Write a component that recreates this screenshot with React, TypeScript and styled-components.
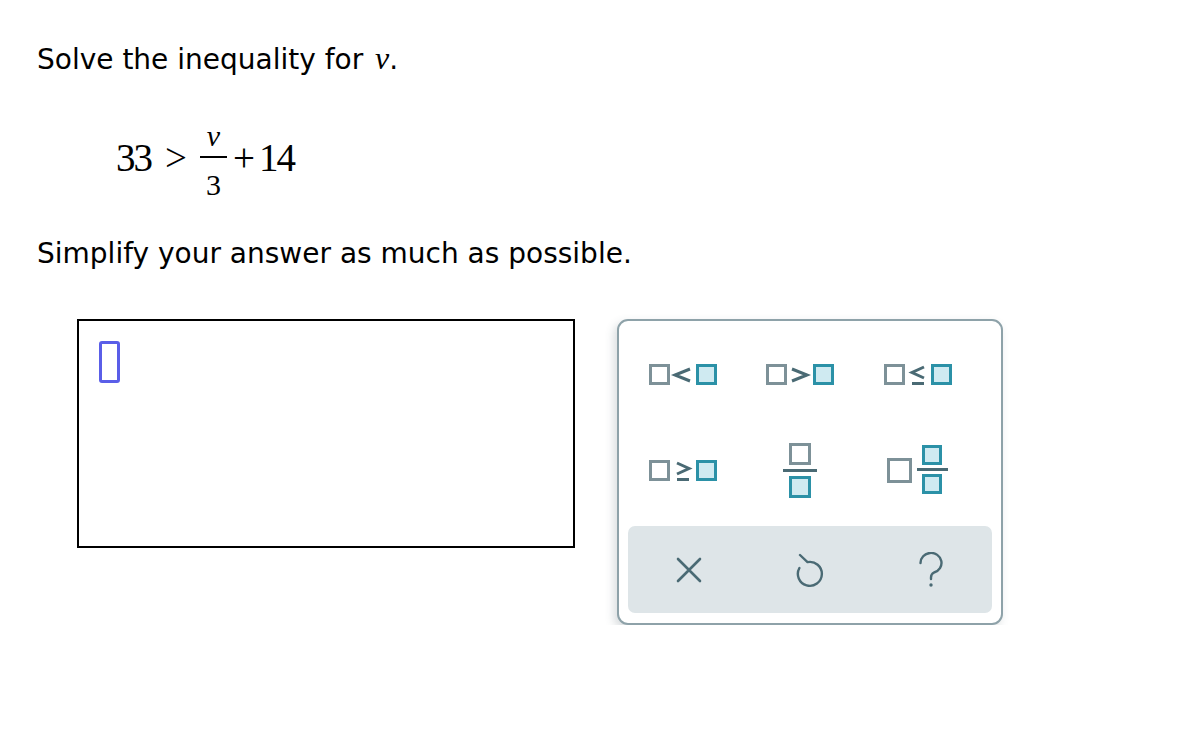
import React from 'react';
import styled, { createGlobalStyle } from 'styled-components';

const GlobalStyle = createGlobalStyle`
  html, body {
    margin: 0;
    padding: 0;
    background: #fff;
  }
  body {
    font-family: "DejaVu Sans", Verdana, sans-serif;
    color: #000;
  }
`;

const Page = styled.div`
  padding: 41px 0 0 37px;
`;

const Prompt = styled.p`
  margin: 0;
  font-size: 28px;
  line-height: 34px;
`;

const Var = styled.span`
  font-family: "Liberation Serif", "Times New Roman", serif;
  font-style: italic;
  font-size: 32px;
  margin-left: 3px;
`;

const Equation = styled.div`
  display: flex;
  align-items: center;
  margin: 45px 0 0 79px;
  height: 70px;
  font-family: "Liberation Serif", "Times New Roman", serif;
  font-size: 39px;
  line-height: 1;
`;

const Term = styled.span<{ $gap?: number }>`
  margin-right: ${(p) => p.$gap ?? 0}px;
  letter-spacing: -2px;
`;

const Fraction = styled.span`
  display: inline-flex;
  flex-direction: column;
  align-items: stretch;
  width: 27px;
  margin-right: 6px;
`;

const Numer = styled.span`
  height: 38px;
  display: flex;
  align-items: flex-end;
  justify-content: center;
  padding-bottom: 5px;
  box-sizing: border-box;
  font-style: italic;
  font-size: 30px;
`;

const Bar = styled.span`
  height: 2px;
  background: #000;
`;

const Denom = styled.span`
  height: 38px;
  display: flex;
  justify-content: center;
  padding-top: 12px;
  box-sizing: border-box;
  font-size: 30px;
`;

const Instruction = styled(Prompt)`
  margin-top: 45px;
`;

const Workspace = styled.div`
  display: flex;
  align-items: flex-start;
  gap: 42px;
  margin: 48px 0 0 40px;
`;

const AnswerBox = styled.div`
  width: 498px;
  height: 229px;
  border: 2px solid #000;
  padding: 20px 0 0 20px;
  box-sizing: border-box;
`;

const Cursor = styled.div`
  width: 21px;
  height: 42px;
  border: 3px solid #5a5ee8;
  border-radius: 3px;
  box-sizing: border-box;
`;

const Keypad = styled.div`
  width: 386px;
  height: 306px;
  box-sizing: border-box;
  border: 2px solid #8ea2a9;
  border-radius: 11px;
  background: #fff;
  box-shadow: -3px 4px 10px rgba(60, 80, 90, 0.2);
  padding: 6px 9px 10px 5px;
  display: flex;
  flex-direction: column;
`;

const KeyGrid = styled.div`
  display: grid;
  grid-template-columns: repeat(3, 117.5px);
  grid-auto-rows: 96px;
`;

const Key = styled.button`
  border: 0;
  background: transparent;
  padding: 0;
  display: flex;
  align-items: center;
  justify-content: center;
  cursor: pointer;
`;

const ActionBar = styled.div`
  margin: 7px 0 0 4px;
  height: 87px;
  background: #dee5e8;
  border-radius: 7px;
  display: grid;
  grid-template-columns: repeat(3, 1fr);
`;

const GRAY = '#7d9198';
const TEAL = '#2b91a7';
const FILL = '#cfeaf1';
const INK = '#4a6a74';

const Box = ({ x, y, s = 18, teal }: { x: number; y: number; s?: number; teal?: boolean }) => (
  <rect
    x={x}
    y={y}
    width={s}
    height={s}
    fill={teal ? FILL : '#fff'}
    stroke={teal ? TEAL : GRAY}
    strokeWidth={3}
  />
);

const CompareIcon = ({ sign }: { sign: string }) => (
  <svg width="68" height="22" viewBox="0 0 68 22">
    <Box x={1.5} y={1.5} />
    <path d={sign} fill="none" stroke={INK} strokeWidth={3} strokeLinecap="butt" strokeLinejoin="miter" />
    <Box x={48.5} y={1.5} teal />
  </svg>
);

const LT = 'M41 5 L26 11 L41 17';
const GT = 'M26 5 L41 11 L26 17';
const LE = 'M40 3 L28 8.5 L40 14 M28 19.5 L40 19.5';
const GE = 'M28 3 L40 8.5 L28 14 M28 19.5 L40 19.5';

const FracIcon = () => (
  <svg width="36" height="56" viewBox="0 0 36 56">
    <Box x={8.5} y={1.5} s={19} />
    <rect x={1} y={26} width={34} height={3} fill={INK} />
    <Box x={8.5} y={34.5} s={19} teal />
  </svg>
);

const MixedIcon = () => (
  <svg width="62" height="52" viewBox="0 0 62 52">
    <Box x={1.5} y={14.5} s={22} />
    <rect x={30} y={23} width={31} height={3} fill={INK} />
    <Box x={36.5} y={1.5} s={17} teal />
    <Box x={36.5} y={30.5} s={17} teal />
  </svg>
);

const ClearIcon = () => (
  <svg width="26" height="26" viewBox="0 0 26 26">
    <path d="M2 2 L24 24 M24 2 L2 24" stroke={INK} strokeWidth={2.6} strokeLinecap="round" />
  </svg>
);

// circular arrow: open at upper left, with a hook rising from the top end
const UndoIcon = () => (
  <svg width="28" height="36" viewBox="0 0 28 36">
    <path
      d="M4 3 L11.5 10.1 A12 12 0 1 1 3.4 16"
      fill="none"
      stroke={INK}
      strokeWidth={2.4}
      strokeLinecap="round"
      strokeLinejoin="round"
    />
  </svg>
);

const HelpIcon = () => (
  <svg width="28" height="36" viewBox="0 0 28 36">
    <path
      d="M3.5 11 A10.5 10 0 1 1 17 20.5 C15 21.5 14 23 14 25.5 V27"
      fill="none"
      stroke={INK}
      strokeWidth={2.4}
      strokeLinecap="round"
    />
    <circle cx="14" cy="33" r="1.7" fill={INK} />
  </svg>
);

export default function App() {
  return (
    <>
      <GlobalStyle />
      <Page>
        <Prompt>
          Solve the inequality for <Var>v</Var>.
        </Prompt>
        <Equation>
          <Term $gap={14}>33</Term>
          <Term $gap={15}>&gt;</Term>
          <Fraction>
            <Numer>v</Numer>
            <Bar />
            <Denom>3</Denom>
          </Fraction>
          <Term $gap={6}>+</Term>
          <Term>14</Term>
        </Equation>
        <Instruction>Simplify your answer as much as possible.</Instruction>
        <Workspace>
          <AnswerBox>
            <Cursor />
          </AnswerBox>
          <Keypad>
            <KeyGrid>
              <Key aria-label="less than"><CompareIcon sign={LT} /></Key>
              <Key aria-label="greater than"><CompareIcon sign={GT} /></Key>
              <Key aria-label="less or equal"><CompareIcon sign={LE} /></Key>
              <Key aria-label="greater or equal"><CompareIcon sign={GE} /></Key>
              <Key aria-label="fraction"><FracIcon /></Key>
              <Key aria-label="mixed number"><MixedIcon /></Key>
            </KeyGrid>
            <ActionBar>
              <Key aria-label="clear"><ClearIcon /></Key>
              <Key aria-label="undo"><UndoIcon /></Key>
              <Key aria-label="help"><HelpIcon /></Key>
            </ActionBar>
          </Keypad>
        </Workspace>
      </Page>
    </>
  );
}
